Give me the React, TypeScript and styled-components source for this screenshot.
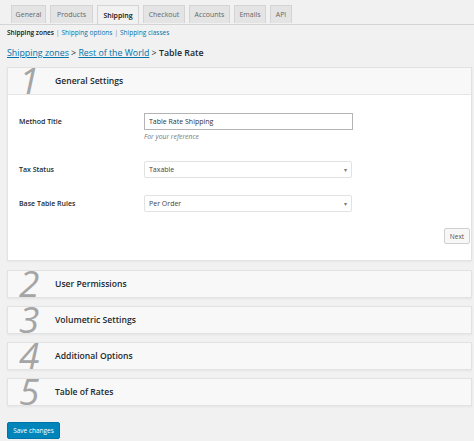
import React from 'react'
import styled, { createGlobalStyle } from 'styled-components'

const GlobalStyle = createGlobalStyle`
  body {
    margin: 0;
    background: #f1f1f1;
    font-family: "Open Sans", "DejaVu Sans", sans-serif;
    color: #23282d;
  }
`

const tabs = [
  { label: 'General', w: 35 },
  { label: 'Products', w: 43 },
  { label: 'Shipping', w: 42 },
  { label: 'Checkout', w: 42 },
  { label: 'Accounts', w: 41 },
  { label: 'Emails', w: 32 },
  { label: 'API', w: 22 },
]
const sections = ['User Permissions', 'Volumetric Settings', 'Additional Options', 'Table of Rates']

const App = () => {
  return (
    <Page>
      <GlobalStyle />
      <TabBar>
        {tabs.map((t) => (
          <Tab key={t.label} w={t.w} active={t.label === 'Shipping'}>{t.label}</Tab>
        ))}
      </TabBar>
      <Content>
        <SubNav>
          <strong>Shipping zones</strong>
          <Sep>|</Sep>
          <SubLink>Shipping options</SubLink>
          <Sep>|</Sep>
          <SubLink>Shipping classes</SubLink>
        </SubNav>
        <Crumbs>
          <CrumbLink>Shipping zones</CrumbLink> &gt; <CrumbLink>Rest of the World</CrumbLink> &gt; <b>Table Rate</b>
        </Crumbs>

        <Panel gap={7}>
          <PanelHead>
            <Step>1</Step>
            <PanelTitle>General Settings</PanelTitle>
          </PanelHead>
          <PanelBody>
            <FieldRow gap={18}>
              <Label>Method Title</Label>
              <Control>
                <TextInput defaultValue="Table Rate Shipping" />
                <Hint>For your reference</Hint>
              </Control>
            </FieldRow>
            <FieldRow gap={18}>
              <Label>Tax Status</Label>
              <Control>
                <Select>
                  <span>Taxable</span>
                  <Caret>▾</Caret>
                </Select>
              </Control>
            </FieldRow>
            <FieldRow gap={17}>
              <Label>Base Table Rules</Label>
              <Control>
                <Select>
                  <span>Per Order</span>
                  <Caret>▾</Caret>
                </Select>
              </Control>
            </FieldRow>
            <Actions>
              <NextButton>Next</NextButton>
            </Actions>
          </PanelBody>
        </Panel>

        {sections.map((s, i) => (
          <Panel key={s} gap={i === 0 ? 9 : 8}>
            <PanelHead collapsed>
              <Step>{i + 2}</Step>
              <PanelTitle>{s}</PanelTitle>
            </PanelHead>
          </Panel>
        ))}

        <SaveButton>Save changes</SaveButton>
      </Content>
    </Page>
  )
}

export default App

const Page = styled.div`
  padding-top: 5px;
  min-height: 436px;
`

const TabBar = styled.div`
  display: flex;
  gap: 4px;
  padding-left: 11px;
  border-bottom: 1px solid #d4d4d4;
  height: 19px;
`

const Tab = styled.div<{ active?: boolean; w: number }>`
  display: flex;
  align-items: center;
  justify-content: center;
  width: ${(p) => p.w}px;
  box-sizing: border-box;
  height: ${(p) => (p.active ? '19px' : '18px')};
  margin-bottom: ${(p) => (p.active ? '-1px' : '0')};
  background: ${(p) => (p.active ? '#f1f1f1' : '#e4e4e4')};
  border: 1px solid #d4d4d4;
  border-bottom: none;
  font-size: 7px;
  font-weight: ${(p) => (p.active ? 600 : 400)};
  color: ${(p) => (p.active ? '#111' : '#666')};
`

const Content = styled.div`
  padding: 0 2px 0 7px;
`

const SubNav = styled.div`
  margin-top: 3px;
  font-size: 6.5px;
  line-height: 9px;
  color: #0073aa;
  strong {
    color: #111;
    font-weight: 600;
  }
`

const Sep = styled.span`
  color: #888;
  margin: 0 2px;
`

const SubLink = styled.span`
  color: #0073aa;
`

const Crumbs = styled.div`
  margin-top: 9px;
  font-size: 8.8px;
  line-height: 14px;
  color: #23282d;
  b {
    font-weight: 600;
  }
`

const CrumbLink = styled.span`
  color: #0073aa;
  text-decoration: underline;
`

const Panel = styled.div<{ gap: number }>`
  margin-top: ${(p) => p.gap}px;
  background: #fff;
  border: 1px solid #e2e2e2;
  box-shadow: 0 1px 2px rgba(0, 0, 0, 0.05);
`

const PanelHead = styled.div<{ collapsed?: boolean }>`
  display: flex;
  align-items: center;
  height: 26px;
  background: #f8f8f8;
  border-bottom: ${(p) => (p.collapsed ? 'none' : '1px solid #e5e5e5')};
`

const Step = styled.div`
  width: 47px;
  padding-left: 11px;
  box-sizing: border-box;
  height: 26px;
  line-height: 23px;
  font-size: 37px;
  font-style: italic;
  font-weight: 400;
  color: #a5a5a5;
`

const PanelTitle = styled.div`
  font-size: 8.6px;
  font-weight: 600;
  color: #23282d;
`

const PanelBody = styled.div`
  padding: 0 0 16px 11px;
`

const FieldRow = styled.div<{ gap: number }>`
  display: flex;
  align-items: flex-start;
  margin-top: ${(p) => p.gap}px;
`

const Label = styled.div`
  width: 125px;
  font-size: 7px;
  font-weight: 600;
  line-height: 17px;
  color: #23282d;
`

const Control = styled.div`
  display: flex;
  flex-direction: column;
`

const TextInput = styled.input`
  width: 209px;
  height: 17px;
  box-sizing: border-box;
  border: 1px solid #b4b4b4;
  padding: 0 4px;
  font-family: inherit;
  font-size: 7px;
  color: #333;
  outline: none;
`

const Hint = styled.div`
  margin-top: 1px;
  font-size: 6.8px;
  font-style: italic;
  color: #777;
  line-height: 12px;
`

const Select = styled.div`
  display: flex;
  align-items: center;
  justify-content: space-between;
  width: 208px;
  height: 17px;
  box-sizing: border-box;
  border: 1px solid #e2e2e2;
  border-radius: 2px;
  padding: 0 4px;
  font-size: 7px;
  color: #444;
  background: #fff;
`

const Caret = styled.span`
  font-size: 6px;
  color: #777;
`

const Actions = styled.div`
  display: flex;
  justify-content: flex-end;
  margin-top: 16px;
`

const NextButton = styled.button`
  height: 16px;
  width: 26px;
  padding: 0;
  margin-right: 1px;
  background: #f7f7f7;
  border: 1px solid #d0d0d0;
  border-radius: 2px;
  font-family: inherit;
  font-size: 6.5px;
  color: #555;
`

const SaveButton = styled.button`
  display: block;
  margin-top: 16px;
  height: 17px;
  width: 53px;
  padding: 0;
  background: #0085ba;
  border: 1px solid #0073aa;
  border-radius: 2px;
  font-family: inherit;
  font-size: 6.5px;
  color: #fff;
`
